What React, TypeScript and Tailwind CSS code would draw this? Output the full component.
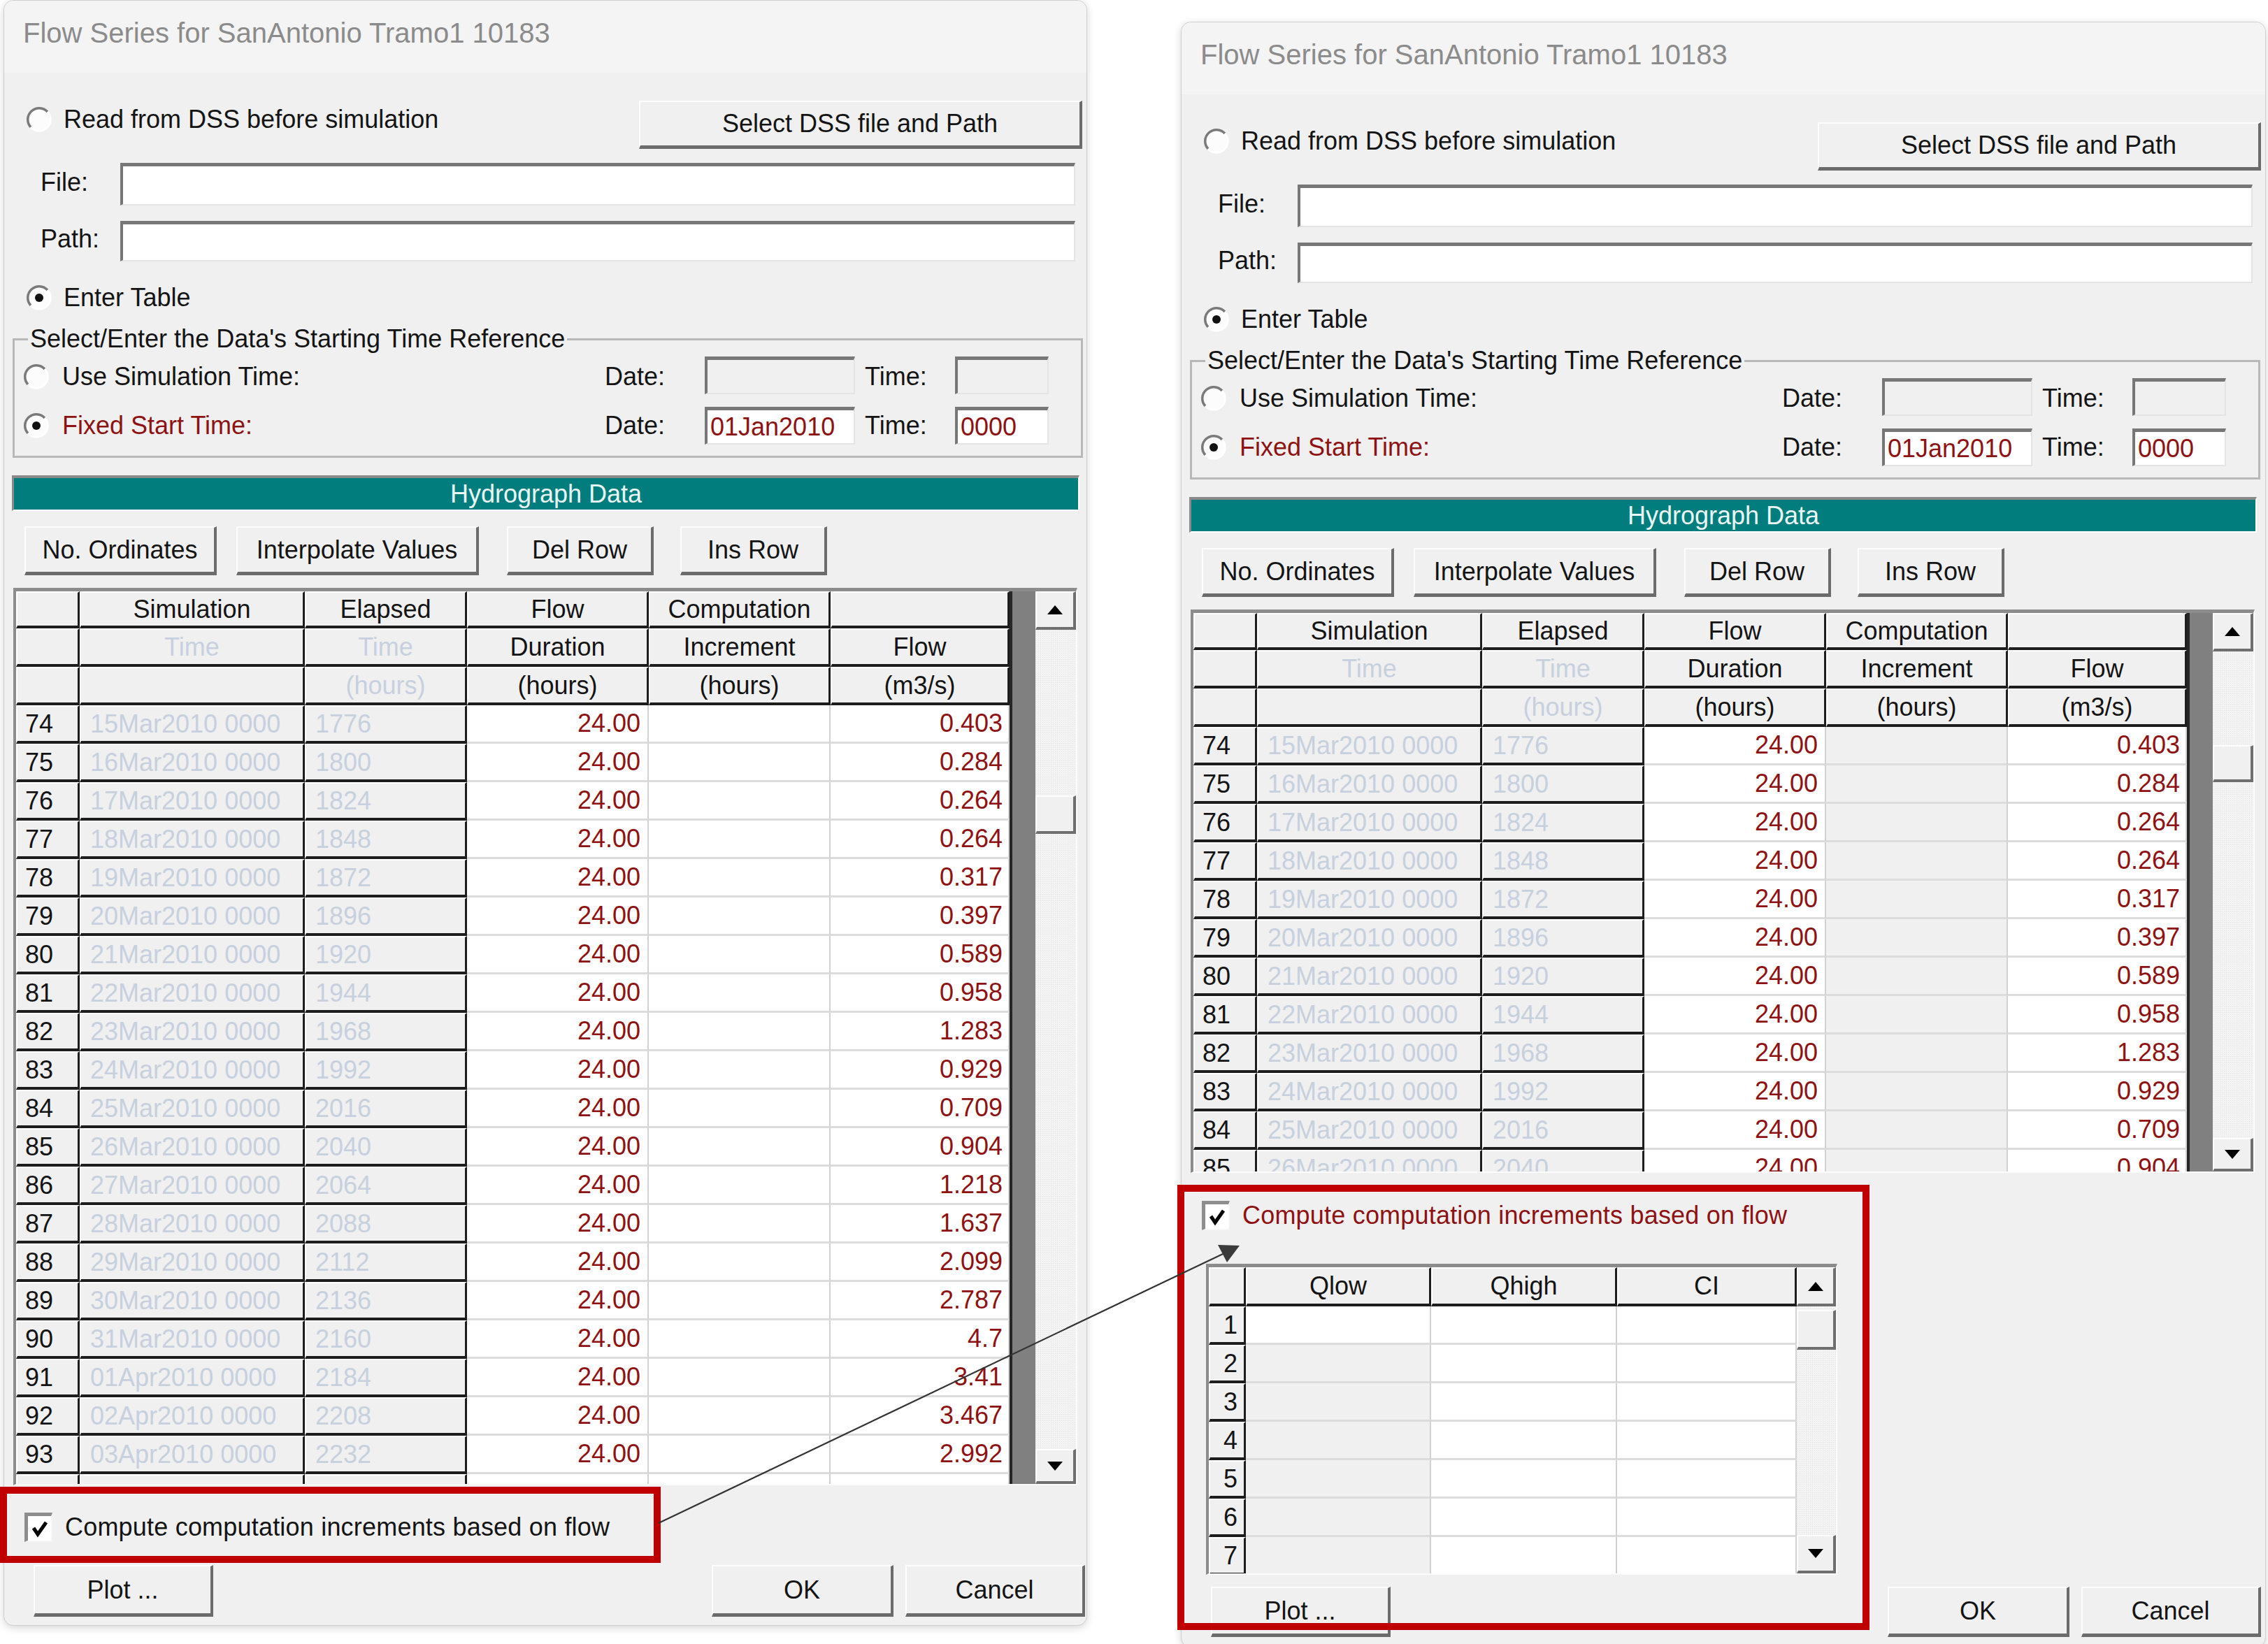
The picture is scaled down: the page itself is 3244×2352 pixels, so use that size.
import React from "react";

const FONT = "font-['Liberation_Sans',Arial,sans-serif]";
const INK = "text-[#141414]";
const RED = "text-[#8e1212]";
const PALE = "text-[#c6d0de]";

// 3D looks of the classic controls
const raised =
  "bg-[#f0f0f0] border-t-2 border-l-2 border-t-[#fdfdfd] border-l-[#fdfdfd] border-b-[5px] border-r-[4px] border-b-[#6b6b6b] border-r-[#6b6b6b]";
const raisedSm =
  "bg-[#f0f0f0] border-t-2 border-l-2 border-t-[#fdfdfd] border-l-[#fdfdfd] border-b-[4px] border-r-[4px] border-b-[#6f6f6f] border-r-[#6f6f6f]";
const sunken =
  "border-t-[5px] border-l-[4px] border-t-[#777777] border-l-[#777777] border-b-2 border-r-2 border-b-[#e4e4e4] border-r-[#e4e4e4]";
const frame =
  "border-t-[5px] border-l-[4px] border-t-[#8c8c8c] border-l-[#8c8c8c] border-b-2 border-r-2 border-b-[#fbfbfb] border-r-[#fbfbfb]";
const hdrCell =
  "bg-[#f0f0f0] border-t-2 border-l-2 border-t-white border-l-white border-b-[4px] border-r-[3px] border-b-[#1d1d1d] border-r-[#1d1d1d]";
const whiteCell = "bg-white border-b-[3px] border-r-2 border-b-[#dcdcdc] border-r-[#d2d2d2]";
const grayCell = "bg-[#f0f0f0] border-b-[3px] border-r-2 border-b-[#dcdcdc] border-r-[#d2d2d2]";

const FLOWS = [
  "0.403", "0.284", "0.264", "0.264", "0.317", "0.397", "0.589", "0.958", "1.283", "0.929",
  "0.709", "0.904", "1.218", "1.637", "2.099", "2.787", "4.7", "3.41", "3.467", "2.992",
];

const ROWS = FLOWS.map((flow, i) => {
  const d = 15 + i;
  const date =
    d <= 31
      ? `${String(d).padStart(2, "0")}Mar2010 0000`
      : `${String(d - 31).padStart(2, "0")}Apr2010 0000`;
  return { n: String(74 + i), date, el: String(1776 + 24 * i), dur: "24.00", flow };
});

const BLANK = { n: "", date: "", el: "", dur: "", flow: "" };

const COLW = ["w-[91px]", "w-[322px]", "w-[232px]", "w-[260px]", "w-[260px]", "w-[256px]"];

const HEAD: [string, boolean][][] = [
  [["", false], ["Simulation", false], ["Elapsed", false], ["Flow", false], ["Computation", false], ["", false]],
  [["", false], ["Time", true], ["Time", true], ["Duration", false], ["Increment", false], ["Flow", false]],
  [["", false], ["", false], ["(hours)", true], ["(hours)", false], ["(hours)", false], ["(m3/s)", false]],
];

function Radio({ on }: { on?: boolean }) {
  return (
    <svg width="38" height="38" viewBox="0 0 38 38" className="shrink-0">
      <circle cx="19" cy="19" r="16" fill="#fcfcfc" />
      <path d="M31 8 A16 16 0 0 0 7 30" fill="none" stroke="#7a7a7a" strokeWidth="3.5" />
      <path d="M7 30 A16 16 0 0 0 31 8" fill="none" stroke="#ffffff" strokeWidth="3" />
      {on && <circle cx="19" cy="19" r="6" fill="#111111" />}
    </svg>
  );
}

function CheckBox() {
  return (
    <div className="w-[40px] h-[42px] shrink-0 bg-white border-t-[5px] border-l-[5px] border-t-[#8d8d8d] border-l-[#8d8d8d] border-b-2 border-r-2 border-b-[#f6f6f6] border-r-[#f6f6f6] flex items-center justify-center">
      <svg width="26" height="26" viewBox="0 0 26 26">
        <path d="M4 12 L10 21 L22 4" fill="none" stroke="#000000" strokeWidth="5" />
      </svg>
    </div>
  );
}

function Btn({ label, cls }: { label: string; cls: string }) {
  return <div className={`flex items-center justify-center shrink-0 ${raised} ${cls}`}>{label}</div>;
}

function Field({ value, cls, off }: { value?: string; cls: string; off?: boolean }) {
  return (
    <div className={`flex items-center pl-[4px] shrink-0 ${sunken} ${off ? "bg-[#f0f0f0]" : "bg-white"} ${RED} ${cls}`}>
      {value}
    </div>
  );
}

function Tri({ down }: { down?: boolean }) {
  return (
    <svg width="22" height="13" viewBox="0 0 22 13">
      <path d={down ? "M0 0 L22 0 L11 13 Z" : "M0 13 L22 13 L11 0 Z"} fill="#000000" />
    </svg>
  );
}

function ScrollBar({ w, upH, thumb, downH }: { w: string; upH: string; thumb: string; downH: string }) {
  return (
    <div className={`flex flex-col shrink-0 bg-[#f3f3f3] bg-[radial-gradient(#e2e2e2_0.6px,transparent_0.8px)] bg-[size:3px_3px] ${w}`}>
      <div className={`flex items-center justify-center shrink-0 ${raisedSm} ${upH}`}>
        <Tri />
      </div>
      <div className={`shrink-0 ${raisedSm} ${thumb}`} />
      <div className="flex-1" />
      <div className={`flex items-center justify-center shrink-0 ${raisedSm} ${downH}`}>
        <Tri down />
      </div>
    </div>
  );
}

function Cell({ cls, children }: { cls: string; children?: React.ReactNode }) {
  return <div className={`flex items-center shrink-0 h-full overflow-hidden whitespace-nowrap ${cls}`}>{children}</div>;
}

function FlowTable({
  rows,
  h,
  compGray,
  thumb,
  downH,
}: {
  rows: typeof ROWS;
  h: string;
  compGray?: boolean;
  thumb: string;
  downH: string;
}) {
  return (
    <div className={`ml-[13px] w-[1522px] flex shrink-0 ${frame} ${h}`}>
      <div className="w-[1421px] flex flex-col overflow-hidden">
        {HEAD.map((row, r) => (
          <div key={r} className={`flex shrink-0 ${r === 0 ? "h-[53px]" : "h-[55px]"}`}>
            {row.map(([t, pale], c) => (
              <Cell key={c} cls={`justify-center ${COLW[c]} ${hdrCell} ${pale ? PALE : ""}`}>
                {t}
              </Cell>
            ))}
          </div>
        ))}
        {rows.map((r, i) => (
          <div key={i} className="flex shrink-0 h-[55px]">
            <Cell cls={`pl-[11px] ${COLW[0]} ${hdrCell}`}>{r.n}</Cell>
            <Cell cls={`pl-[13px] ${COLW[1]} ${hdrCell} ${PALE}`}>{r.date}</Cell>
            <Cell cls={`pl-[13px] ${COLW[2]} ${hdrCell} ${PALE}`}>{r.el}</Cell>
            <Cell cls={`justify-end pr-[10px] ${COLW[3]} ${whiteCell} ${RED}`}>{r.dur}</Cell>
            <Cell cls={`${COLW[4]} ${compGray ? grayCell : whiteCell}`} />
            <Cell cls={`justify-end pr-[8px] ${COLW[5]} ${whiteCell} ${RED}`}>{r.flow}</Cell>
          </div>
        ))}
      </div>
      <div className="w-[37px] shrink-0 bg-[#808080] border-l-[4px] border-l-[#262626]" />
      <ScrollBar w="w-[58px]" upH="h-[55px]" thumb={thumb} downH={downH} />
    </div>
  );
}

function RangeTable() {
  const cols = ["w-[265px]", "w-[266px]", "w-[257px]"];
  return (
    <div className={`ml-[35px] w-[903px] h-[445px] flex shrink-0 overflow-hidden ${frame}`}>
      <div className="w-[841px] flex flex-col overflow-hidden">
        <div className="flex shrink-0 h-[56px]">
          <Cell cls={`w-[53px] ${hdrCell}`} />
          {["Qlow", "Qhigh", "CI"].map((t, c) => (
            <Cell key={t} cls={`justify-center ${cols[c]} ${hdrCell}`}>
              {t}
            </Cell>
          ))}
        </div>
        {[1, 2, 3, 4, 5, 6, 7].map((n) => (
          <div key={n} className="flex shrink-0 h-[55px]">
            <Cell cls={`justify-end pr-[9px] w-[53px] ${hdrCell}`}>{n}</Cell>
            <Cell cls={`${cols[0]} ${n === 1 ? whiteCell : grayCell}`} />
            <Cell cls={`${cols[1]} ${whiteCell}`} />
            <Cell cls={`${cols[2]} ${whiteCell}`} />
          </div>
        ))}
      </div>
      <ScrollBar w="w-[56px]" upH="h-[56px]" thumb="mt-[5px] h-[57px]" downH="h-[55px]" />
    </div>
  );
}

function Dialog({ right }: { right?: boolean }) {
  return (
    <div
      className={`relative flex flex-col shrink-0 h-[2326px] bg-[#f0f0f0] rounded-[14px] border border-[#cfcfcf] shadow-[0_3px_12px_rgba(0,0,0,0.16)] ${
        right ? "ml-[134px] mt-[31px] w-[1552px]" : "ml-[5px] w-[1550px]"
      }`}
    >
      <div className="h-[103px] shrink-0 rounded-t-[14px] bg-[#f4f4f4] pl-[27px] pt-[26px] text-[40px] leading-[40px] text-[#8b8b8b] whitespace-nowrap">
        Flow Series for SanAntonio Tramo1 10183
      </div>

      <div className="mt-[40px] h-[69px] flex shrink-0">
        <div className="mt-[8px] h-[38px] flex items-center gap-[16px] pl-[31px]">
          <Radio />
          <span>Read from DSS before simulation</span>
        </div>
        <Btn label="Select DSS file and Path" cls="ml-auto mr-[6px] w-[634px] h-[69px]" />
      </div>

      <div className="mt-[20px] h-[61px] flex items-center shrink-0 pl-[52px]">
        <span className="w-[114px] -mt-[6px]">File:</span>
        <Field cls="w-[1366px] h-full" />
      </div>
      <div className="mt-[22px] h-[58px] flex items-center shrink-0 pl-[52px]">
        <span className="w-[114px] -mt-[6px]">Path:</span>
        <Field cls="w-[1366px] h-full" />
      </div>

      <div className="mt-[33px] h-[38px] flex items-center gap-[16px] shrink-0 pl-[31px]">
        <Radio on />
        <span>Enter Table</span>
      </div>

      <fieldset className="mt-[22px] ml-[12px] w-[1531px] shrink-0 border-[3px] border-[#b8b8b8] px-[12px] pb-[16px]">
        <legend className="ml-[7px] px-[3px] whitespace-nowrap">Select/Enter the Data's Starting Time Reference</legend>
        <div className="mt-[7px] h-[54px] flex items-center">
          <div className="w-[832px] flex items-center gap-[18px] mt-[4px]">
            <Radio />
            <span>Use Simulation Time:</span>
          </div>
          <span className="w-[143px] mt-[4px]">Date:</span>
          <Field cls="w-[215px] h-full" off />
          <span className="ml-[14px] w-[129px] mt-[4px]">Time:</span>
          <Field cls="w-[134px] h-full" off />
        </div>
        <div className="mt-[18px] h-[54px] flex items-center">
          <div className="w-[832px] flex items-center gap-[18px]">
            <Radio on />
            <span className={RED}>Fixed Start Time:</span>
          </div>
          <span className="w-[143px]">Date:</span>
          <Field cls="w-[215px] h-full" value="01Jan2010" />
          <span className="ml-[14px] w-[129px]">Time:</span>
          <Field cls="w-[134px] h-full" value="0000" />
        </div>
      </fieldset>

      <div className="mt-[25px] ml-[11px] w-[1527px] h-[51px] shrink-0 flex items-center justify-center bg-[#007d7c] text-[#eaf6f6] border-t-[4px] border-l-[3px] border-t-[#8a8a8a] border-l-[#8a8a8a] border-b-2 border-r-2 border-b-white border-r-white">
        Hydrograph Data
      </div>

      <div className="mt-[22px] h-[70px] flex shrink-0 pl-[29px]">
        <Btn label="No. Ordinates" cls="w-[275px] h-full" />
        <Btn label="Interpolate Values" cls="ml-[28px] w-[347px] h-full" />
        <Btn label="Del Row" cls="ml-[40px] w-[210px] h-full" />
        <Btn label="Ins Row" cls="ml-[38px] w-[210px] h-full" />
      </div>

      <div className="mt-[18px] flex shrink-0">
        {right ? (
          <FlowTable rows={ROWS.slice(0, 12)} h="h-[806px]" compGray thumb="mt-[134px] h-[53px]" downH="h-[48px]" />
        ) : (
          <FlowTable rows={[...ROWS, BLANK]} h="h-[1284px]" thumb="mt-[237px] h-[55px]" downH="h-[50px]" />
        )}
      </div>

      {right ? (
        <>
          <div className="mt-[40px] h-[42px] flex items-center gap-[18px] shrink-0 pl-[29px]">
            <CheckBox />
            <span className={`${RED} tracking-[0.2px]`}>Compute computation increments based on flow</span>
          </div>
          <div className="mt-[48px] flex shrink-0">
            <RangeTable />
          </div>
          <div className="mt-[17px] h-[72px] flex shrink-0">
            <Btn label="Plot ..." cls="ml-[42px] w-[257px] h-full" />
            <Btn label="OK" cls="ml-[711px] w-[260px] h-full" />
            <Btn label="Cancel" cls="ml-[17px] w-[257px] h-full" />
          </div>
          <div className="absolute left-[-6px] top-[1663px] w-[990px] h-[637px] border-[10px] border-[#c00000]" />
        </>
      ) : (
        <>
          <div className="mt-[39px] h-[42px] flex items-center gap-[18px] shrink-0 pl-[29px]">
            <CheckBox />
            <span className="tracking-[0.2px]">Compute computation increments based on flow</span>
          </div>
          <div className="mt-[33px] h-[74px] flex shrink-0">
            <Btn label="Plot ..." cls="ml-[42px] w-[257px] h-full" />
            <Btn label="OK" cls="ml-[713px] w-[260px] h-full" />
            <Btn label="Cancel" cls="ml-[17px] w-[257px] h-full" />
          </div>
          <div className="absolute left-[-6px] top-[2126px] w-[945px] h-[109px] border-[10px] border-[#c00000]" />
        </>
      )}
    </div>
  );
}

export default function App() {
  return (
    <div className={`relative w-[3244px] h-[2352px] overflow-hidden bg-white flex items-start text-[36px] leading-[36px] ${FONT} ${INK}`}>
      <Dialog />
      <Dialog right />
      {/* callout from the left checkbox to the expanded panel */}
      <svg className="absolute left-0 top-0 pointer-events-none" width="3244" height="2352" viewBox="0 0 3244 2352">
        <line x1="942" y1="2179" x2="1749" y2="1794" stroke="#333333" strokeWidth="2.2" />
        <polygon points="1773,1782 1742,1781 1755,1806" fill="#3a3a3a" />
      </svg>
    </div>
  );
}
